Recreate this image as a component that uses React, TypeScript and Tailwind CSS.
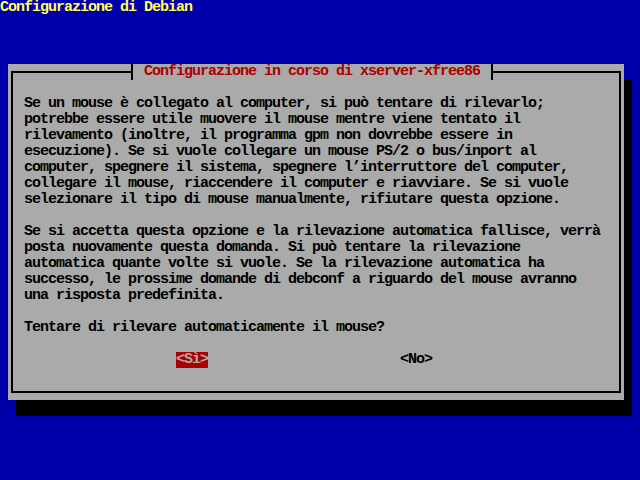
const BODY = [
  "Se un mouse è collegato al computer, si può tentare di rilevarlo;",
  "potrebbe essere utile muovere il mouse mentre viene tentato il",
  "rilevamento (inoltre, il programma gpm non dovrebbe essere in",
  "esecuzione). Se si vuole collegare un mouse PS/2 o bus/inport al",
  "computer, spegnere il sistema, spegnere l’interruttore del computer,",
  "collegare il mouse, riaccendere il computer e riavviare. Se si vuole",
  "selezionare il tipo di mouse manualmente, rifiutare questa opzione.",
  "",
  "Se si accetta questa opzione e la rilevazione automatica fallisce, verrà",
  "posta nuovamente questa domanda. Si può tentare la rilevazione",
  "automatica quante volte si vuole. Se la rilevazione automatica ha",
  "successo, le prossime domande di debconf a riguardo del mouse avranno",
  "una risposta predefinita.",
  "",
  "Tentare di rilevare automaticamente il mouse?",
];

export default function App() {
  return (
    <div
      className="w-[640px] h-[480px] overflow-hidden bg-[#0000aa] text-[15px] leading-[16px] tracking-[-1px] font-bold"
      style={{ fontFamily: '"Liberation Mono", "DejaVu Sans Mono", monospace' }}
    >
      {/* backtitle */}
      <div className="h-[16px] text-[#ffff55] whitespace-pre">Configurazione di Debian</div>

      {/* dialog with its shadow */}
      <div className="relative mt-[48px] ml-[8px] w-[616px] h-[336px] bg-[#aaaaaa] px-[3px] py-[7px] shadow-[8px_16px_0_0_#000]">
        <div className="h-full border-2 border-black pl-[11px] pt-[23px]">
          {BODY.map((line, i) => (
            <div key={i} className="h-[16px] whitespace-pre text-black">
              {line}
            </div>
          ))}

          {/* buttons */}
          <div className="flex mt-[16px] pl-[152px] h-[16px]">
            <span className="w-[32px] bg-[#aa0000] text-[#aaaaaa] whitespace-pre">&lt;Sì&gt;</span>
            <span className="ml-[192px] w-[32px] text-black whitespace-pre">&lt;No&gt;</span>
          </div>
        </div>

        {/* title sitting over the top border */}
        <div className="absolute top-0 left-[123px] flex h-[16px]">
          <span className="w-[2px] h-[16px] bg-black" />
          <span className="bg-[#aaaaaa] px-[11px] text-[#aa0000] whitespace-pre">
            Configurazione in corso di xserver-xfree86
          </span>
          <span className="w-[2px] h-[16px] bg-black" />
        </div>
      </div>
    </div>
  );
}
